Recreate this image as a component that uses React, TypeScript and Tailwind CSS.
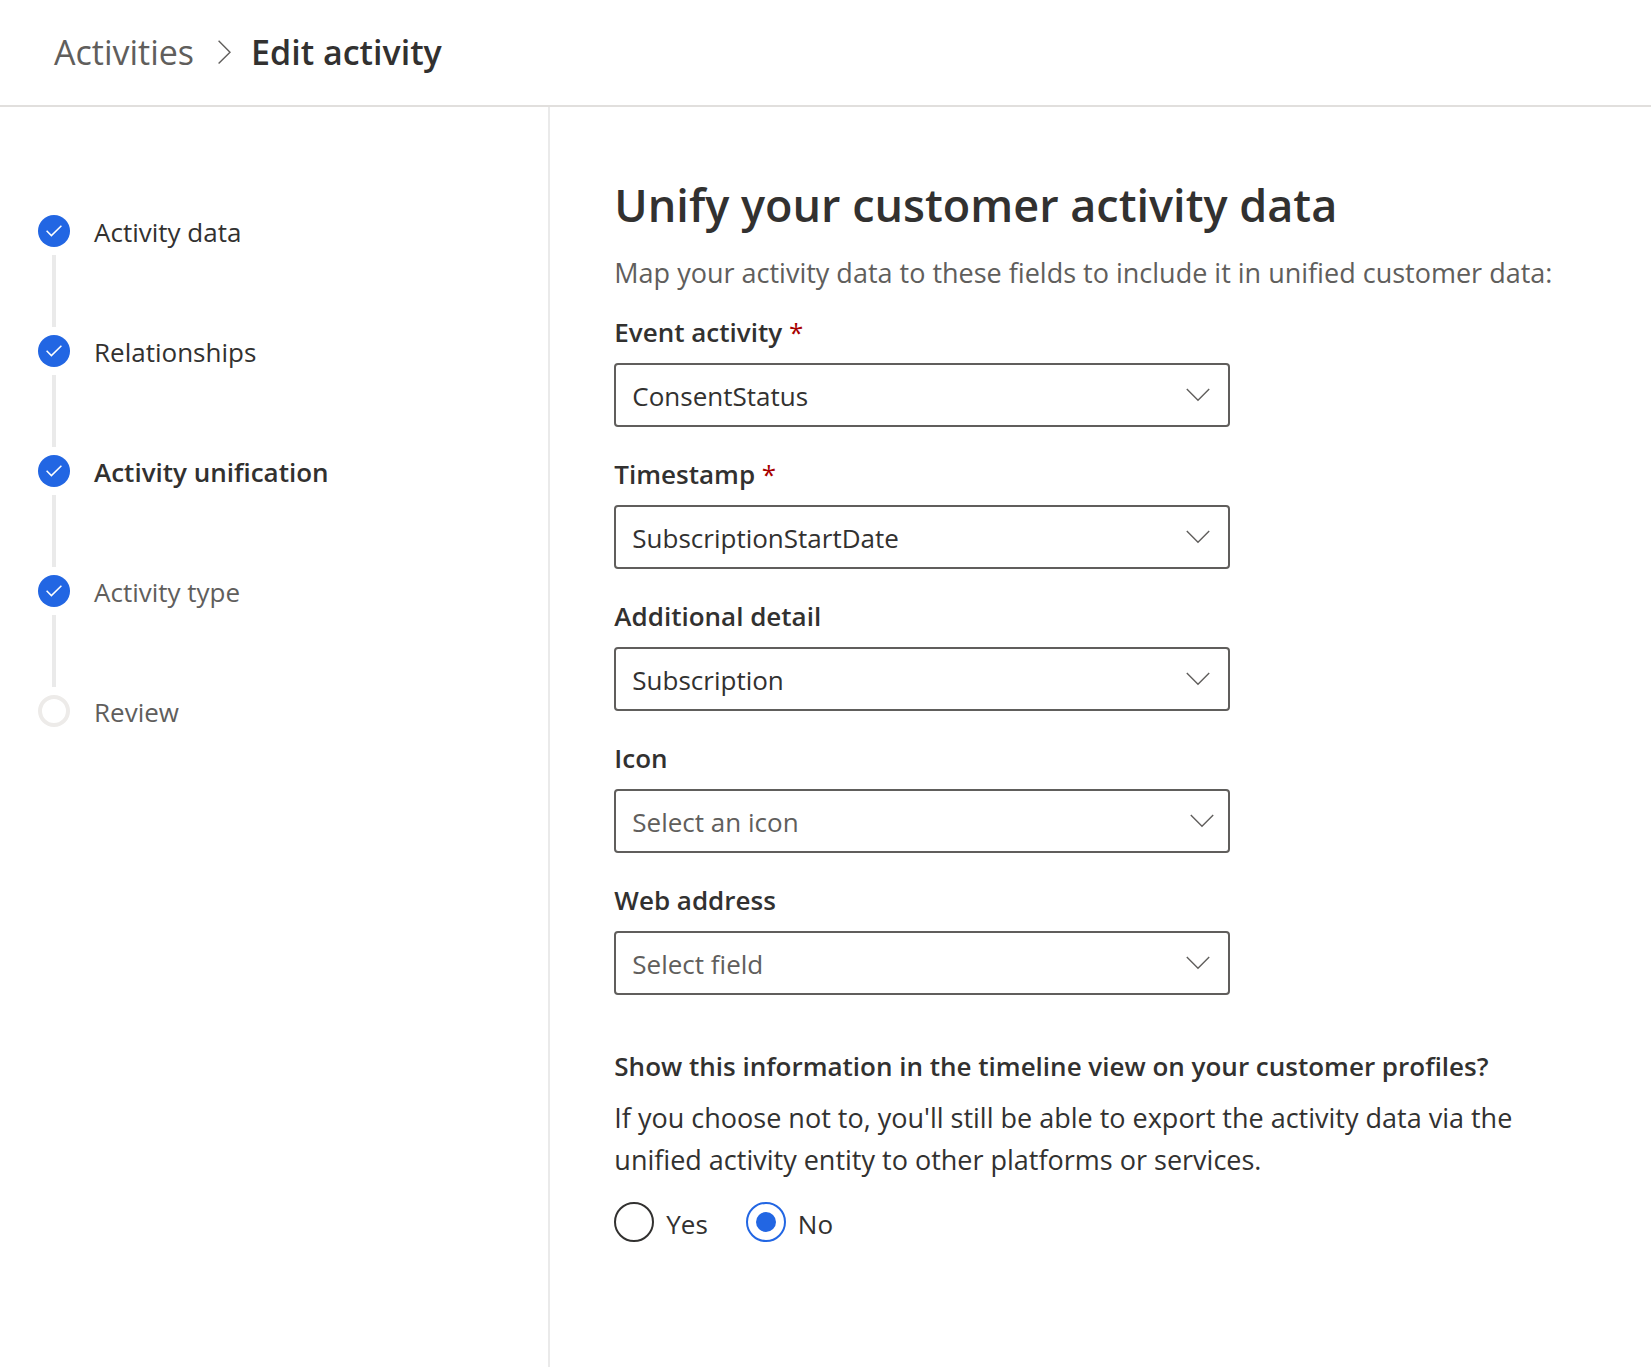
import { useState } from "react";

type Step = { label: string; done: boolean; tone: string };

const steps: Step[] = [
  { label: "Activity data", done: true, tone: "text-[#323130]" },
  { label: "Relationships", done: true, tone: "text-[#323130]" },
  { label: "Activity unification", done: true, tone: "font-semibold text-[#323130]" },
  { label: "Activity type", done: true, tone: "text-[#605e5c]" },
  { label: "Review", done: false, tone: "text-[#605e5c]" },
];

type Field = {
  id: string;
  label: string;
  required?: boolean;
  value?: string;
  placeholder?: string;
  chevron?: string;
};

const fields: Field[] = [
  { id: "event-activity", label: "Event activity", required: true, value: "ConsentStatus" },
  { id: "timestamp", label: "Timestamp", required: true, value: "SubscriptionStartDate" },
  { id: "additional-detail", label: "Additional detail", value: "Subscription" },
  { id: "icon", label: "Icon", placeholder: "Select an icon", chevron: "right-4" },
  { id: "web-address", label: "Web address", placeholder: "Select field" },
];

function StepItem({ step, last, current }: { step: Step; last: boolean; current: boolean }) {
  return (
    <li className="flex gap-6">
      <div className="flex flex-col items-center gap-2">
        {step.done ? (
          <span className="flex size-8 items-center justify-center rounded-full bg-[#2266e3]">
            <svg width="16" height="12" viewBox="0 0 16 12" fill="none" stroke="#fff" strokeWidth="1.5" aria-hidden="true">
              <path d="M0.6 5.8 L5.4 10.6 L15.4 0.8" />
            </svg>
          </span>
        ) : (
          <span className="size-8 rounded-full border-4 border-[#edebe9]" />
        )}
        {!last && <span className="mb-2 h-18 w-1 bg-[#eaeaea]" />}
      </div>
      <a href="#" aria-current={current ? "step" : undefined} className={`self-start pt-px leading-8 ${step.tone}`}>
        {step.label}
      </a>
    </li>
  );
}

function SelectField({ field }: { field: Field }) {
  return (
    <div>
      <label htmlFor={field.id} className="block leading-9 font-semibold">
        {field.label}
        {field.required && <span className="font-normal text-[#a80000]"> *</span>}
      </label>
      <div className="relative mt-[13px] max-w-[616px]">
        <select
          id={field.id}
          required={field.required}
          defaultValue={field.value ?? ""}
          className={`h-16 w-full appearance-none rounded border-2 border-[#605e5c] bg-white pt-0.5 pr-14 pl-4 ${
            field.value ? "text-[#323130]" : "text-[#605e5c]"
          }`}
        >
          <option value={field.value ?? ""}>{field.value ?? field.placeholder}</option>
        </select>
        <svg
          width="24"
          height="14"
          viewBox="0 0 24 14"
          fill="none"
          stroke="#605e5c"
          strokeWidth="1.4"
          aria-hidden="true"
          className={`pointer-events-none absolute top-[25px] ${field.chevron ?? "right-5"}`}
        >
          <path d="M0.8 1 L12 12.2 L23.2 1" />
        </svg>
      </div>
    </div>
  );
}

export default function App() {
  const [show, setShow] = useState("No");

  return (
    <div className="flex min-h-screen flex-col bg-white font-['Open_Sans',sans-serif] text-[26px] text-[#323130]">
      <header className="border-b-2 border-[#e1dfdd] pt-7 pb-7">
        <nav aria-label="Breadcrumb">
          <ol className="flex items-center pl-[54px] text-[34px] leading-[49px]">
            <li>
              <a href="#" className="text-[#605e5c]">
                Activities
              </a>
            </li>
            <li aria-hidden="true" className="mr-5 ml-6">
              <svg width="13" height="25" viewBox="0 0 13 25" fill="none" stroke="#605e5c" strokeWidth="1.4">
                <path d="M0.6 0.8 L12 12.2 L0.6 23.6" />
              </svg>
            </li>
            <li aria-current="page" className="font-semibold">
              Edit activity
            </li>
          </ol>
        </nav>
      </header>

      <div className="flex flex-1">
        <aside className="w-1/3 shrink-0 border-r-2 border-[#eaeaea] pt-27 pl-[38px]">
          <ol>
            {steps.map((step, i) => (
              <StepItem key={step.label} step={step} last={i === steps.length - 1} current={i === 2} />
            ))}
          </ol>
        </aside>

        <main className="min-w-0 flex-1 px-16 pt-16 pb-16">
          <h1 className="text-[45px] leading-17 font-semibold">Unify your customer activity data</h1>
          <p className="mt-4 text-[27px] leading-9 text-[#605e5c]">
            Map your activity data to these fields to include it in unified customer data:
          </p>

          <form>
            <div className="mt-[23px] flex flex-col gap-[29px]">
              {fields.map((field) => (
                <SelectField key={field.id} field={field} />
              ))}
            </div>

            <fieldset className="mt-[53px]">
              <legend className="leading-9 font-semibold">
                Show this information in the timeline view on your customer profiles?
              </legend>
              <p className="mt-[13px] max-w-[920px] text-[27px] leading-[42px]">
                If you choose not to, you'll still be able to export the activity data via the unified activity entity
                to other platforms or services.
              </p>
              <div className="mt-[19px] flex gap-[38px]">
                {["Yes", "No"].map((option) => (
                  <label key={option} className="flex items-center gap-3 leading-10">
                    <input
                      type="radio"
                      name="show-in-timeline"
                      value={option}
                      checked={show === option}
                      onChange={() => setShow(option)}
                      className="grid size-10 appearance-none place-content-center rounded-full border-2 border-[#323130] before:size-5 before:rounded-full checked:border-[#2266e3] checked:before:bg-[#2266e3]"
                    />
                    <span className="pt-1">{option}</span>
                  </label>
                ))}
              </div>
            </fieldset>
          </form>
        </main>
      </div>
    </div>
  );
}
